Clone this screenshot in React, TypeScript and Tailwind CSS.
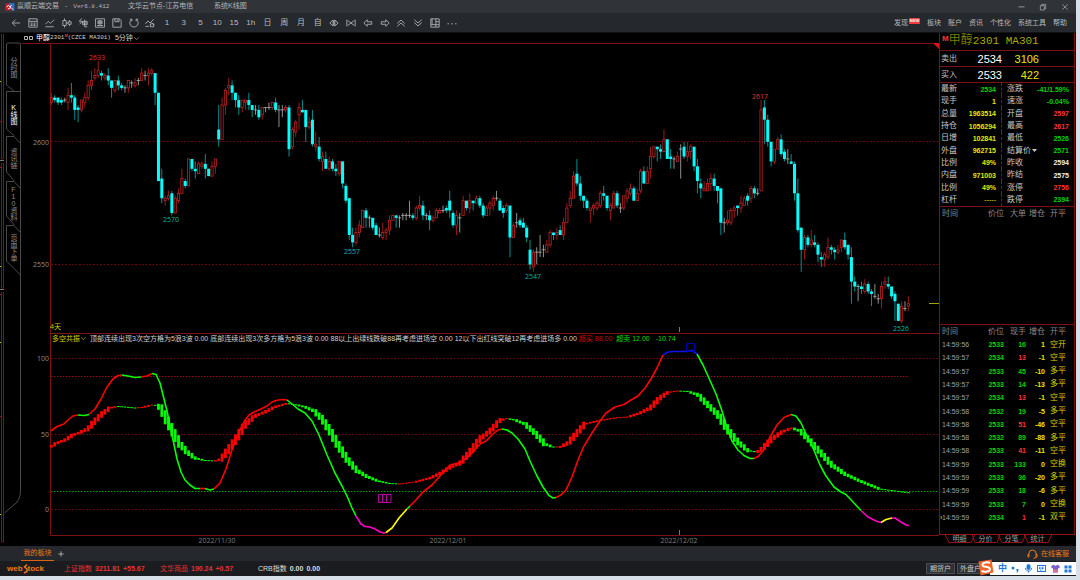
import { useState } from 'react';
import type { ReactNode } from 'react';

type Candle = [number, number, number, number];

// open, high, low, close, counted from 2500
const CANDLES: Candle[] = [
  [116, 120, 115, 118], [118, 119, 116, 117], [118, 118, 115, 116], [117, 118, 115, 116], [117, 118, 116, 117],
  [116, 122, 113, 119], [119, 124, 116, 118], [118, 119, 109, 113], [114, 115, 108, 113], [113, 117, 112, 117],
  [116, 120, 114, 118], [118, 125, 117, 123], [123, 129, 121, 125], [126, 130, 125, 127], [127, 133, 126, 129],
  [128, 129, 125, 127], [126, 128, 125, 127], [127, 130, 123, 125], [125, 125, 118, 122], [121, 125, 120, 125],
  [125, 127, 121, 123], [123, 124, 121, 122], [122, 123, 120, 122], [122, 125, 120, 125], [124, 125, 122, 124],
  [123, 126, 122, 124], [125, 126, 123, 125], [125, 130, 125, 128], [127, 129, 125, 127], [127, 130, 123, 128],
  [128, 130, 127, 129], [128, 128, 115, 120], [120, 120, 84, 84], [85, 89, 75, 77], [76, 78, 74, 77],
  [77, 80, 76, 78], [79, 80, 70, 71], [71, 78, 71, 77], [76, 81, 75, 79], [79, 89, 79, 85],
  [84, 85, 81, 82], [82, 93, 82, 93], [93, 93, 88, 89], [89, 92, 85, 88], [87, 92, 87, 91],
  [90, 92, 89, 91], [91, 95, 85, 89], [89, 89, 86, 86], [86, 92, 86, 90], [90, 93, 87, 93],
  [105, 115, 98, 101], [101, 118, 101, 115], [115, 122, 111, 121], [122, 126, 119, 123], [123, 125, 117, 120],
  [120, 120, 114, 117], [117, 119, 111, 114], [114, 117, 112, 117], [116, 117, 113, 117], [117, 120, 113, 115],
  [115, 115, 110, 113], [113, 115, 111, 113], [113, 115, 109, 110], [111, 114, 109, 114], [114, 114, 112, 114],
  [114, 116, 113, 114], [114, 116, 113, 116], [116, 118, 112, 113], [113, 115, 106, 113], [113, 115, 110, 113],
  [113, 115, 112, 114], [114, 115, 94, 97], [98, 106, 97, 105], [104, 109, 102, 108], [111, 116, 105, 114],
  [113, 117, 112, 112], [113, 113, 100, 106], [106, 110, 105, 108], [109, 113, 98, 99], [98, 104, 96, 99],
  [98, 102, 92, 93], [92, 96, 88, 94], [93, 96, 89, 89], [89, 94, 88, 92], [92, 93, 88, 89],
  [89, 91, 86, 88], [87, 92, 86, 92], [92, 92, 81, 83], [82, 83, 75, 76], [77, 77, 60, 62],
  [62, 65, 57, 59], [59, 65, 58, 63], [63, 68, 61, 66], [65, 72, 65, 72], [72, 73, 65, 69],
  [69, 70, 65, 69], [69, 69, 64, 65], [66, 67, 62, 62], [62, 65, 61, 62], [61, 67, 60, 63],
  [63, 65, 60, 64], [64, 70, 62, 68], [68, 70, 68, 70], [70, 70, 65, 69], [69, 70, 65, 69],
  [70, 71, 68, 70], [70, 71, 68, 70], [70, 76, 69, 70], [70, 71, 68, 69], [69, 74, 68, 73],
  [73, 78, 72, 74], [74, 76, 68, 70], [70, 71, 68, 70], [70, 72, 64, 68], [68, 70, 67, 69],
  [69, 73, 69, 72], [71, 73, 71, 72], [72, 74, 71, 72], [73, 74, 71, 72], [76, 80, 69, 72],
  [71, 72, 65, 66], [66, 72, 62, 70], [69, 71, 63, 69], [70, 78, 70, 76], [76, 76, 72, 73],
  [73, 79, 71, 76], [76, 76, 72, 75], [75, 78, 75, 77], [77, 78, 73, 74], [74, 75, 69, 70],
  [70, 74, 70, 73], [73, 76, 70, 75], [74, 78, 72, 77], [77, 80, 76, 77], [76, 77, 72, 72],
  [73, 74, 69, 71], [72, 75, 71, 74], [74, 74, 53, 61], [61, 67, 61, 66], [67, 71, 65, 67],
  [68, 69, 65, 66], [67, 69, 65, 65], [65, 66, 59, 61], [56, 60, 48, 50], [49, 56, 47, 55],
  [55, 57, 50, 55], [55, 62, 53, 55], [56, 58, 53, 56], [55, 60, 55, 58], [58, 64, 57, 63],
  [63, 63, 60, 62], [62, 65, 60, 63], [64, 66, 62, 62], [62, 69, 60, 67], [67, 75, 67, 73],
  [74, 80, 73, 77], [77, 88, 77, 86], [87, 93, 82, 83], [83, 86, 76, 78], [78, 78, 73, 76],
  [76, 77, 72, 73], [72, 73, 67, 73], [73, 75, 70, 74], [73, 76, 72, 75], [74, 80, 73, 79],
  [79, 82, 76, 78], [78, 78, 72, 73], [72, 75, 68, 74], [73, 80, 73, 79], [79, 80, 73, 74],
  [73, 75, 71, 73], [73, 78, 72, 78], [77, 81, 75, 80], [79, 83, 78, 81], [81, 82, 76, 76],
  [76, 81, 76, 79], [80, 89, 79, 88], [88, 90, 83, 83], [83, 90, 83, 88], [89, 98, 85, 94],
  [94, 98, 93, 98], [98, 98, 92, 97], [97, 99, 93, 96], [96, 105, 96, 101], [101, 101, 93, 93],
  [94, 97, 89, 93], [93, 94, 89, 93], [92, 96, 92, 94], [97, 99, 85, 97], [98, 100, 93, 94],
  [94, 100, 92, 96], [96, 99, 93, 98], [98, 98, 88, 90], [90, 93, 79, 84], [83, 85, 77, 81],
  [80, 84, 80, 81], [80, 85, 80, 83], [83, 87, 80, 85], [85, 87, 80, 82], [82, 82, 75, 80],
  [81, 81, 62, 67], [67, 69, 63, 67], [67, 72, 66, 68], [67, 73, 66, 72], [72, 74, 69, 73],
  [74, 74, 70, 73], [73, 78, 71, 75], [74, 78, 74, 77], [78, 79, 74, 76], [77, 82, 75, 81],
  [81, 82, 77, 79], [79, 81, 78, 79], [80, 117, 80, 113], [114, 117, 99, 109], [109, 111, 98, 100],
  [100, 100, 90, 92], [92, 97, 91, 97], [97, 102, 97, 101], [101, 103, 94, 95], [96, 97, 92, 93],
  [93, 97, 91, 93], [92, 95, 91, 91], [91, 92, 76, 79], [79, 85, 63, 64], [65, 65, 47, 56],
  [56, 62, 52, 61], [61, 62, 57, 58], [58, 64, 57, 60], [59, 62, 57, 58], [58, 59, 51, 54],
  [53, 55, 49, 52], [52, 55, 49, 54], [53, 61, 52, 57], [57, 58, 54, 56], [56, 57, 52, 55],
  [55, 58, 54, 56], [57, 60, 55, 60], [60, 63, 56, 57], [58, 58, 52, 54], [53, 57, 34, 43],
  [43, 45, 39, 41], [41, 42, 35, 41], [41, 43, 38, 40], [39, 44, 38, 42], [42, 43, 38, 39],
  [39, 40, 33, 38], [37, 42, 36, 37], [36, 38, 34, 36], [36, 43, 32, 41], [42, 45, 40, 43],
  [42, 45, 40, 41], [41, 41, 36, 37], [38, 39, 27, 35], [34, 34, 27, 27], [27, 35, 26, 33],
  [32, 35, 31, 32], [33, 37, 31, 34],
];

const candleX = (i: number) => 29.33 + i * 3.3477;
const priceY = (p: number) => 98.8 + (100 - p) * 2.453;

const PRICE_LABELS = [
  { text: '2633', x: 75, y: 17, up: true },
  { text: '2570', x: 149, y: 179, up: false },
  { text: '2557', x: 330, y: 211, up: false },
  { text: '2547', x: 511, y: 236, up: false },
  { text: '2617', x: 738, y: 56, up: true },
  { text: '2526', x: 879, y: 288, up: false },
];

const RED = '#ff0000';
const GREEN = '#00ff00';
const MAGENTA = '#ff00c8';
const YELLOW = '#ffff00';
const BLUE = '#1010f0';

// each run starts at the point where the run before it ends
const FAST_LINE = [
  { color: RED, points: '51,430 57,425.5 64,423 68,419 73,415 78,414' },
  { color: GREEN, points: '78,414 84,414.5 89,413.5' },
  { color: RED, points: '89,413.5 95,408 101,398 107,386 113,378 118,374.5 122,374' },
  { color: GREEN, points: '122,374 128,375 135,376.5 141,376' },
  { color: RED, points: '141,376 147,375 152,372.5' },
  { color: GREEN, points: '152,372.5 156,373.5 160,382 163,394 167,410 172,434 177,458 181,471 185,479 190,484 195,487.5 200,487.5' },
  { color: RED, points: '200,487.5 205,487.5' },
  { color: GREEN, points: '205,487.5 210,489 214,488' },
  { color: RED, points: '214,488 220,482 226,468 232,449 238,433 245,419 249,414 254,411 262,407.5 267,405 272,401 278,399 284,398.5 287,399' },
  { color: GREEN, points: '287,399 292,403 298,408 305,412 312,420 319,434 327,454 335,472 342,485 347,495 352,507 356,515' },
  { color: MAGENTA, points: '356,515 361,523 365,525.5 370,526 375,528 380,531 384,532 386,531.5' },
  { color: YELLOW, points: '386,531.5 392,527 399,517 407,508' },
  { color: GREEN, points: '407,508 410,505' },
  { color: RED, points: '410,505 415,500 423,491 432,484 440,475 450,464 458,462 466,458 473,451 480,443 486,440 493,433 498,429 502,428' },
  { color: GREEN, points: '502,428 507,429 512,432 518,438 525,448 530,460 537,475 543,486 549,494.5 553,497 556,496.5' },
  { color: RED, points: '556,496.5 561,494 566,489 572,476 578,459 584,445 592,432 600,420 606,412 615,406 624,403.5 631,399 638,395 645,387 651,378 657,367 663,354' },
  { color: BLUE, points: '663,354 668,351 674,350.5 680,350.5 687,350.5 692,349.5 697,353' },
  { color: GREEN, points: '697,353 703,364 708,375 716,393 722,410 727,427 732,440 738,449 744,454.5 750,457.5 754,457.5' },
  { color: RED, points: '754,457.5 758,455.5 763,450 770,436 777,424 784,416.5 791,413.5' },
  { color: GREEN, points: '791,413.5 796,415 801,422 807,435 813,447 820,464 826,475 834,486 841,491 846,493.5 853,501 861,509.5' },
  { color: MAGENTA, points: '861,509.5 868,516 876,520 881,521.5' },
  { color: YELLOW, points: '881,521.5 886,518.5 892,517' },
  { color: MAGENTA, points: '892,517 895,517 901,521 906,524 909,524.5' },
];

const SLOW_KEYS: [number, number][] = [
  [51, 445.5], [57, 442], [65, 439], [73, 434], [80, 431.5], [88, 427.5], [95, 420], [102, 413], [110, 407],
  [117, 405.5], [125, 406], [135, 407], [142, 406.5], [152, 404], [157, 404.5], [161, 408], [165, 416],
  [172, 429], [180, 443], [187, 451], [195, 457], [205, 459.5], [215, 460], [221, 458], [228, 449],
  [236, 438], [245, 424], [255, 415], [265, 411], [275, 406], [287, 402.5], [297, 404], [305, 406],
  [314, 410], [322, 418], [330, 430], [338, 444], [347, 458], [357, 469.5], [367, 475.5], [378, 480],
  [390, 482.5], [400, 483], [415, 481], [430, 477], [440, 472.5], [450, 466.5], [460, 462], [470, 451],
  [480, 438], [490, 430], [500, 419.5], [507, 417.5], [515, 419], [525, 423], [535, 432], [545, 443],
  [553, 446], [560, 446], [568, 442], [577, 432], [585, 423], [600, 419.5], [615, 417], [628, 416],
  [640, 412], [650, 407], [660, 397], [668, 391.5], [678, 390], [688, 390.5], [698, 394], [708, 404],
  [718, 414], [728, 429], [738, 441], [748, 449.5], [757, 451], [763, 447], [772, 438], [782, 431],
  [792, 427], [800, 430], [810, 440], [820, 451], [832, 464], [845, 473], [860, 480], [880, 488],
  [895, 490], [910, 492],
];

function slowY(x: number) {
  const k = SLOW_KEYS.findIndex(([kx]) => kx >= x);
  if (k <= 0) return SLOW_KEYS[0][1];
  const [x0, y0] = SLOW_KEYS[k - 1];
  const [x1, y1] = SLOW_KEYS[k];
  return y0 + ((y1 - y0) * (x - x0)) / (x1 - x0);
}

const STATS = [
  ['最新', '2534', 'text-[#00d200]', '涨跌', '-41/1.59%', 'text-[#00d200]'],
  ['现手', '1', 'text-[#e6e600]', '速涨', '-0.04%', 'text-[#00d200]'],
  ['总量', '1963514', 'text-[#e6e600]', '开盘', '2597', 'text-[#ff3232]'],
  ['持仓', '1056294', 'text-[#e6e600]', '最高', '2617', 'text-[#ff3232]'],
  ['日增', '102841', 'text-[#e6e600]', '最低', '2526', 'text-[#00d200]'],
  ['外盘', '962715', 'text-[#e6e600]', '结算价', '2571', 'text-[#00d200]'],
  ['比例', '49%', 'text-[#e6e600]', '昨收', '2594', 'text-[#eeeeee]'],
  ['内盘', '971003', 'text-[#e6e600]', '昨结', '2575', 'text-[#eeeeee]'],
  ['比例', '49%', 'text-[#e6e600]', '涨停', '2756', 'text-[#ff3232]'],
  ['杠杆', '-----', 'text-[#a0a000]', '跌停', '2394', 'text-[#00d200]'],
];

const TICKS = [
  ['14:59:56', 2533, 16, 1, '空开', 'g'],
  ['14:59:57', 2534, 13, -1, '空平', 'r'],
  ['14:59:57', 2533, 45, -10, '多平', 'g'],
  ['14:59:57', 2533, 14, -13, '多平', 'g'],
  ['14:59:57', 2534, 13, -1, '空平', 'r'],
  ['14:59:58', 2532, 19, -5, '多平', 'g'],
  ['14:59:58', 2533, 51, -46, '空平', 'r'],
  ['14:59:58', 2532, 89, -88, '多平', 'g'],
  ['14:59:58', 2533, 41, -11, '空平', 'r'],
  ['14:59:59', 2533, 133, 0, '空换', 'g'],
  ['14:59:59', 2533, 36, -20, '多平', 'g'],
  ['14:59:59', 2533, 18, -6, '多平', 'g'],
  ['14:59:59', 2533, 7, 0, '空换', 'g'],
  ['14:59:59', 2534, 1, -1, '双平', 'r'],
];

const TOOLS: { label: string; text?: string; d?: string }[] = [
  { label: '返回', d: 'M22 12H4M11 4l-8 8 8 8' },
  { label: '报价', d: 'M2 2h20v20H2zM2 8h20M6 12h5M13 12h5M6 15h5M13 15h5M6 18h5M13 18h5' },
  { label: '分时', d: 'M1 15l7-7 5 5 9-9M1 21h20' },
  { label: 'K线', d: 'M6 1v5M6 18v5M2 6h8v12H2zM18 5v4M18 15v4M15 9h7v6h-7zM10 12h5' },
  { label: '画线', d: 'M9 1L3 8h7l-6 7M11 8h11v8H11zM16 4v17h6M11 12h11' },
  { label: '窗口', d: 'M1 2h22v20H1zM12 5v11M7 7h10v7H7zM7 10h10M5 18h14' },
  { label: '保存', d: 'M2 2h16l4 4v16H2zM7 2v7h10V2M13 4v3' },
  { label: '刷新', d: 'M7 3a10 10 0 1 0 10 0M7 3H2M7 3v5M17 3h5M17 3v5' },
  { label: '指标', d: 'M1 14l6-7 5 5 9-9M1 20h9M13 14h8v7h-8zM16 11l6 6' },
  { label: '1分钟', text: '1' },
  { label: '3分钟', text: '3' },
  { label: '5分钟', text: '5' },
  { label: '10分钟', text: '10' },
  { label: '15分钟', text: '15' },
  { label: '1小时', text: '1h' },
  { label: '日线', text: '日' },
  { label: '周线', text: '周' },
  { label: '月线', text: '月' },
  { label: '自定义', text: '自' },
  { label: '缩小', d: 'M10 5l-8 7 8 7zM14 5l8 7-8 7zM12 5v14' },
  { label: '放大', d: 'M2 4v16M4 6l8 6-8 6M22 4v16M20 6l-8 6 8 6' },
  { label: '左移', d: 'M10 4l-8 8 8 8v-5h11V9H10z' },
  { label: '右移', d: 'M14 4l8 8-8 8v-5H3V9h11z' },
  { label: '上一个', d: 'M3 13l9-8 9 8M3 20l9-8 9 8' },
  { label: '下一个', d: 'M3 4l9 8 9-8M3 11l9 8 9-8' },
  { label: '布局', d: 'M2 2h20v20H2zM14 2v20M2 16h20M14 9h8M5 2v14' },
  { label: '更多', d: 'M1 14h4M10 14h4M19 14h4' },
];

const SIDE_TABS = [
  { name: '分时图', height: 'h-[49px]' },
  { name: 'K线图', height: 'h-[44px]' },
  { name: '资讯链', height: 'h-[45px]' },
  { name: 'F10资料', height: 'h-[45px]' },
  { name: '页面下单', height: 'h-[44px]' },
];

function Icon({ d, className }: { d: string; className: string }) {
  return (
    <svg className={className} viewBox="0 0 24 24" fill="none" stroke="currentColor" strokeWidth={2}>
      <path d={d} />
    </svg>
  );
}

function TitleBar() {
  return (
    <header className="flex h-[13px] items-center bg-[#303338] pl-[5px] text-[7px] text-[#b4b6b8]">
      <svg className="mr-[2px] h-[10px] w-[10px]" viewBox="0 0 20 20">
        <rect x="1" y="3" width="11" height="14" fill="#c81e28" />
        <path d="M8 2h11v16h-6V9H8z" fill="#2c6fb8" />
        <path d="M3 10l4-3 3 3 3-4M6 14l6-3 4 4" stroke="#fff" strokeWidth={2} fill="none" />
      </svg>
      <span className="flex w-[111px] items-center gap-[6px]">
        赢顺云端交易<span>-</span>
        <span className="font-['Liberation_Mono',monospace] text-[6px]">Ver6.8.412</span>
      </span>
      <span className="w-[86px]">文华云节点-江苏电信</span>
      <span className="flex-1">系统K线图</span>
      <button type="button" aria-label="最小化" className="w-[22px]">
        <Icon d="M4 13h16" className="mx-auto h-[9px] w-[9px]" />
      </button>
      <button type="button" aria-label="还原" className="w-[22px]">
        <Icon d="M4 8h12v13H4zM8 8V4h12v13h-4" className="mx-auto h-[8px] w-[8px]" />
      </button>
      <button type="button" aria-label="关闭" className="w-[22px]">
        <Icon d="M4 4l16 16M20 4L4 20" className="mx-auto h-[8px] w-[8px]" />
      </button>
    </header>
  );
}

function Toolbar() {
  return (
    <div className="flex h-[20px] items-center justify-between border-b border-[#111315] bg-[#25282c] text-[7px] text-[#b9bbbd]">
      <div className="ml-2 grid w-[452px] grid-cols-27 items-center">
        {TOOLS.map((t) => (
          <button key={t.label} type="button" aria-label={t.label} className="flex h-[18px] items-center justify-center pt-px text-[8px] leading-none">
            {t.d ? <Icon d={t.d} className="h-[10px] w-[10px]" /> : t.text}
          </button>
        ))}
      </div>
      <nav className="flex gap-[7px] pr-[9px] leading-[10px]">
        <a href="#discover" className="flex">
          发现
          <span className="ml-px h-[6px] w-[11px] rounded-[1px] bg-[#f03c3c] text-center text-[4px] leading-[6px] font-bold text-white">NEW</span>
        </a>
        <a href="#block">板块</a>
        <a href="#account">账户</a>
        <a href="#news">资讯</a>
        <a href="#custom">个性化</a>
        <a href="#tools">系统工具</a>
        <a href="#help">帮助</a>
      </nav>
    </div>
  );
}

function SideRail({ active, onSelect }: { active: string; onSelect: (name: string) => void }) {
  return (
    <aside className="relative w-[22px] shrink-0 pt-[10px]">
      <svg className="absolute inset-0 h-full w-full" fill="none">
        <g stroke="#8c0f0f">
          <path d="M1.500 1v125h2V1M1.500 130v125h2V130M1.500 259v250h2V259" />
        </g>
        <path d="M0 127.500h4M0 256.500h4" stroke="#777" />
        <path d="M0 48.500h1M0 233.500h1M0 309.500h1M0 481.500h1" stroke="#c8c800" />
        <path d="M0 134.500h2M0 261.500h2M0 88.500h1M0 383.500h1" stroke="#a01414" />
        <g stroke="#4a4a4a">
          <path d="M6.500 11V52l8 6.500M6.500 11q0-1 1-1h12q1 0 1 1v447q0 10-8 15l-8 7" />
          <path d="M20.500 58.500h-14V96l8 7M14 103.500h-7.500V139l8 9M14 103.500l6.500 7M14 148.500h-7.500V183l8 9M14 148.500l6.500 7M14 192.500h-7.500V228l14 14M14 192.500l6.500 7" />
        </g>
      </svg>
      <nav className="relative ml-[6px] flex flex-col">
        {SIDE_TABS.map((tab) => (
          <button
            key={tab.name}
            type="button"
            onClick={() => onSelect(tab.name)}
            className={`${tab.height} ${tab.name === active ? 'text-white' : 'text-[#8c8c8c]'} flex w-[14px] items-center justify-center text-[7px] leading-[14px] [text-orientation:upright] [writing-mode:vertical-rl]`}
          >
            {tab.name}
          </button>
        ))}
      </nav>
    </aside>
  );
}

function CandleShape({ candle, i }: { candle: Candle; i: number }) {
  const [open, high, low, close] = candle;
  const x = candleX(i);
  const top = priceY(Math.max(open, close));
  const height = Math.abs(open - close) * 2.453;
  if (open === close) {
    return <path d={`M${x} ${priceY(high)}V${priceY(low)}M${x - 1.7} ${top}h3.4`} stroke="#b4b4b4" strokeWidth={0.8} />;
  }
  if (close < open) {
    return (
      <g>
        <path d={`M${x} ${priceY(high)}V${priceY(low)}`} stroke="#00a0a0" strokeWidth={0.9} />
        <rect x={x - 1.5} y={top} width={3} height={height} fill="#00ffff" />
      </g>
    );
  }
  return (
    <g stroke="#c42222" strokeWidth={0.8} fill="none">
      <path d={`M${x} ${priceY(high)}V${top}M${x} ${top + height}V${priceY(low)}`} />
      <rect x={x - 1.1} y={top} width={2.2} height={height} />
    </g>
  );
}

function PriceChart() {
  return (
    <svg className="block h-[290px] w-full font-['Open_Sans','Noto_Sans_CJK_SC',sans-serif] text-[7px]">
      <path d="M0 0.500H2000" stroke="#7d1010" />
      <path d="M28.500 0V290" stroke="#7d1010" />
      <g stroke="#640a0a" strokeDasharray="2 1.500">
        <line x1="29" x2="100%" y1="98.500" y2="98.500" />
        <line x1="29" x2="100%" y1="221.500" y2="221.500" />
      </g>
      <g fill="#8c8c8c" textAnchor="end">
        <text x="27" y="102">2600</text>
        <text x="27" y="224">2550</text>
      </g>
      {CANDLES.map((c, i) => (
        <CandleShape key={i} candle={c} i={i} />
      ))}
      {PRICE_LABELS.map((l) => (
        <text key={l.text} x={l.x} y={l.y} textAnchor="middle" fill={l.up ? '#e03232' : '#00b4b4'}>
          {l.text}
        </text>
      ))}
      <path d="M907 260.500h10" stroke="#a0a000" />
      <path d="M911 0h6v6z" fill="#dc1414" />
      <path d="M657.500 284v5" stroke="#777" />
      <text x="28" y="286" fill="#d2d200">4天</text>
    </svg>
  );
}

function IndicatorHeader() {
  return (
    <div className="ml-[28px] flex h-[10px] items-center gap-[2px] overflow-hidden border-t border-l border-[#7d1010] pl-px text-[7px] leading-[9px] whitespace-nowrap text-[#d2d2d2]">
      <button type="button" className="mr-px flex items-center text-[#d2d200]">
        多空共振
        <Icon d="M4 8l8 8 8-8" className="h-[7px] w-[7px]" />
      </button>
      <span>顶部连续出现3次空方格为5浪3波 0.00</span>
      <span>底部连续出现3次多方格为5浪3波 0.00</span>
      <span>88以上出绿线跌破88再考虑进场空 0.00</span>
      <span>12以下出红线突破12再考虑进场多 0.00</span>
      <span className="text-[#dc0000]">超买 88.00</span>
      <span className="pl-[2px] text-[#00dc00]">超卖 12.00</span>
      <span className="pl-[4px] text-[#00dc00]">-10.74</span>
    </div>
  );
}

function IndicatorChart() {
  return (
    <svg className="block h-[203px] w-full font-['Open_Sans',sans-serif] text-[7px]" fill="none">
      <path d="M28.500 0V192.500H2000" stroke="#7d1010" />
      <g stroke="#640a0a" strokeDasharray="2 1.500">
        <line x1="29" x2="100%" y1="15.500" y2="15.500" />
        <line x1="29" x2="100%" y1="91.500" y2="91.500" />
        <line x1="29" x2="100%" y1="166.500" y2="166.500" />
      </g>
      <path d="M29 33.500H886" stroke="#961414" strokeDasharray="1.500 1.500" />
      <line x1="29" x2="100%" y1="148.500" y2="148.500" stroke="#00a000" strokeDasharray="1.500 1.500" />
      <g fill="#8c8c8c" textAnchor="end">
        <text x="27" y="18">100</text>
        <text x="27" y="94">50</text>
        <text x="27" y="169">0</text>
      </g>
      <g fill="#7d7d7d" textAnchor="middle">
        <text x="195" y="200">2022/11/30</text>
        <text x="426" y="200">2022/12/01</text>
        <text x="657" y="200">2022/12/02</text>
      </g>
      <path d="M657.500 187v5" stroke="#777" />
      {/* both series are plotted from the window's corner */}
      <g transform="translate(-22 -342)">
        {CANDLES.map((_, i) => {
          const x = candleX(i) + 22;
          const y = slowY(x);
          const slope = slowY(Math.min(x + 1.67, 910)) - slowY(x - 1.67);
          const h = Math.max(1, Math.abs(slope) * 2.2);
          return <rect key={i} x={x - 1.4} y={y - h / 2} width={2.8} height={h} fill={slope > 0 ? GREEN : RED} />;
        })}
        {FAST_LINE.map((run) => (
          <polyline key={run.points} points={run.points} stroke={run.color} strokeWidth={1.6} strokeLinejoin="round" />
        ))}
        <path d="M378.500 493.500h12.500v8h-12.500zM382.500 493.500v8M386.500 493.500v8" stroke="#b4009b" />
        <path d="M686.500 342.500h8v8h-8z" stroke="#0000b4" />
      </g>
    </svg>
  );
}

function ChartArea() {
  return (
    <section className="min-w-0 flex-1">
      <div className="flex h-[10px] items-center pl-[2px] text-[7px] leading-[10px] text-[#d2d2d2]">
        <svg className="mr-[2px] h-[4px] w-[10px]" fill="none" stroke="#b4b4b4">
          <path d="M.5.5h3v3h-3zM5.500.5h3v3h-3z" />
        </svg>
        <span className="text-white">甲醇</span>
        <span className="font-['Liberation_Mono',monospace] text-[6px]">2301</span>
        <sup className="top-[-2px] text-[4px] font-bold text-[#ff3232]">M</sup>
        <span className="font-['Liberation_Mono',monospace] text-[6px]">(CZCE MA301)</span>
        <button type="button" className="ml-[4px] flex items-center">
          5分钟
          <Icon d="M4 8l8 8 8-8" className="h-[7px] w-[7px]" />
        </button>
      </div>
      <PriceChart />
      <IndicatorHeader />
      <IndicatorChart />
    </section>
  );
}

function ListHead({ third }: { third: string }) {
  return (
    <tr className="h-[13px] text-[8px] text-[#8c8c8c]">
      <th className="w-[31px] text-left font-normal">时间</th>
      <th className="w-[31px] font-normal">价位</th>
      <th className="w-[22px] font-normal">{third}</th>
      <th className="w-[19px] font-normal">增仓</th>
      <th className="w-[21px] font-normal">开平</th>
    </tr>
  );
}

function BidRow({ label, price, volume }: { label: string; price: string; volume: string }) {
  return (
    <div className="flex h-[16px] items-center border-t border-[#7d1010] pl-px text-[11px] leading-[14px]">
      <span className="w-[36px] text-[8px] text-[#c8c8c8]">{label}</span>
      <span className="w-[25px] text-right text-white">{price}</span>
      <span className="w-[37px] text-right text-[#e6e600]">{volume}</span>
    </div>
  );
}

function QuotePanel() {
  return (
    <aside className="flex w-[137px] shrink-0 flex-col">
      <div className="mr-px flex h-[501px] flex-col border-x border-[#7d1010]">
        <h1 className="flex h-[17px] items-center pl-[2px] font-['Liberation_Mono','Noto_Sans_CJK_SC',monospace] text-[11px] leading-[17px] whitespace-pre text-[#a8a800]">
          <span className="mb-[6px] font-['Liberation_Sans',sans-serif] text-[8px] font-bold text-[#ff3232]">M</span>
          <span className="text-[12px] font-light">甲醇</span>2301 MA301
        </h1>
        <BidRow label="卖出" price="2534" volume="3106" />
        <BidRow label="买入" price="2533" volume="422" />
        <div className="grid h-[125px] grid-cols-[62px_1fr] grid-rows-10 border-y border-[#7d1010] text-[7px] font-bold">
          {STATS.map(([l1, v1, c1, l2, v2, c2], i) => (
            <div key={i} className="contents">
              <div className="flex items-center justify-between border-r border-dashed border-[#8c1212] pr-[5px] pl-px leading-none">
                <span className="text-[8px] font-normal text-[#c8c8c8]">{l1}</span>
                <span className={c1}>{v1}</span>
              </div>
              <div className="flex items-center justify-between pr-[5px] pl-[5px] leading-none">
                <span className="flex items-center text-[8px] font-normal text-[#c8c8c8]">
                  {l2}
                  {l2 === '结算价' && (
                    <svg className="ml-px h-[3px] w-[5px]" viewBox="0 0 5 3" fill="currentColor">
                      <path d="M0 0h5L2.500 3z" />
                    </svg>
                  )}
                </span>
                <span className={c2}>{v2}</span>
              </div>
            </div>
          ))}
        </div>
        <div className="h-[117px] pl-[2px]">
          <table className="w-[124px] table-fixed text-right leading-none">
            <thead>
              <ListHead third="大单" />
            </thead>
          </table>
        </div>
        <div className="border-t border-[#7d1010] pl-[2px]">
          <table className="h-[199px] w-[124px] table-fixed text-right text-[7px] leading-none font-bold">
            <thead>
              <ListHead third="现手" />
            </thead>
            <tbody>
              {TICKS.map(([time, price, lots, change, kind, side], i) => (
                <tr key={i}>
                  <td className="relative text-left font-normal text-[#a0a0a0]">
                    {i === TICKS.length - 1 && <span className="absolute -left-[2px] text-[#e6e600]">›</span>}
                    {time}
                  </td>
                  <td className="text-[#00d200]">{price}</td>
                  <td className={side === 'r' ? 'text-[#ff3232]' : 'text-[#00d200]'}>{lots}</td>
                  <td className="text-[#e6e600]">{change}</td>
                  <td className="text-[8px] font-normal text-[#d2d200]">{kind}</td>
                </tr>
              ))}
            </tbody>
          </table>
        </div>
      </div>
      <div className="relative flex h-[11px] pl-[6px] text-[7px] leading-[9px] text-[#a0a0a0]">
        <svg className="absolute inset-0 h-full w-full" fill="none" stroke="#961414">
          <path d="M0 .5h136M6 .5l4 8h22l4-8M33 .5l3 8h22l3-8M59 .5l4 8h20l4-8M85 .5l4 8h20l4-8" />
        </svg>
        {['明细', '分价', '分笔', '统计'].map((name) => (
          <button key={name} type="button" className="relative h-[9px] w-[26px] pl-[3px]">
            {name}
          </button>
        ))}
      </div>
    </aside>
  );
}

function ImeBar() {
  return (
    <div className="relative flex h-[13px] w-[86px] items-center justify-between bg-white pr-[4px] pl-[8px] text-[#1e78dc]">
      <svg className="absolute -top-[3px] -left-[13px] h-[17px] w-[17px]" viewBox="0 0 34 34">
        <path d="M3 5L29 1l4 26-26 6z" fill="#f06428" />
        <path d="M26 8C19 5 9 8 11 13c2 4 14 1 15 7 0 5-10 7-17 4" stroke="#fff" strokeWidth={4} fill="none" />
      </svg>
      <span className="text-[9px] leading-none font-bold">中</span>
      <svg className="h-[8px] w-[8px]" viewBox="0 0 16 16" fill="currentColor">
        <circle cx="4" cy="6" r="3" />
        <path d="M11 8h4v3l-2 4h-2l1-3h-1z" />
      </svg>
      <svg className="h-[9px] w-[9px]" viewBox="0 0 18 18" fill="none" stroke="currentColor" strokeWidth={2}>
        <rect x="6" y="1" width="6" height="10" rx="3" fill="currentColor" />
        <path d="M3 8c0 8 12 8 12 0M9 14v3" />
      </svg>
      <svg className="h-[9px] w-[9px]" viewBox="0 0 18 18" fill="none" stroke="currentColor" strokeWidth={2}>
        <rect x="1" y="3" width="16" height="12" />
        <path d="M4 6.500h10M4 9h10M6 12h6" strokeDasharray="2 1" />
      </svg>
      <svg className="h-[9px] w-[9px]" viewBox="0 0 18 18">
        <path d="M5 1L0 5l2 4 2-1v9h10V8l2 1 2-4-5-4c-1 3-7 3-8 0z" fill="#7d5fc8" />
        <path d="M4 11h10v6H4z" fill="#e66e8c" />
      </svg>
      <svg className="h-[8px] w-[8px]" viewBox="0 0 16 16" fill="currentColor">
        <path d="M1 1h6v6H1zM9 1h6v6H9zM1 9h6v6H1zM9 9h6v6H9z" />
      </svg>
    </div>
  );
}

function Ticker({ className, children }: { className: string; children: ReactNode }) {
  return <div className={`flex gap-[3px] ${className}`}>{children}</div>;
}

function Footer() {
  return (
    <footer className="text-[7px] leading-[10px]">
      <div className="flex h-[15px] items-stretch bg-[#25292e]">
        <button type="button" className="ml-[21px] w-[33px] border-b border-[#dc6414] text-[#f07814]">
          我的板块
        </button>
        <button type="button" aria-label="添加" className="w-[13px] text-[#dcdcdc]">
          <Icon d="M4 12h16M12 4v16" className="mx-auto h-[8px] w-[8px]" />
        </button>
        <a href="#service" className="mr-[7px] ml-auto flex items-center gap-[3px] text-[#f07814]">
          <svg className="h-[10px] w-[11px]" viewBox="0 0 22 20" fill="none" stroke="currentColor" strokeWidth={2}>
            <path d="M4 16V9a7 7 0 0 1 14 0v7M4 10H2v6h2M18 10h2v6l-7 3" />
          </svg>
          在线客服
        </a>
      </div>
      <div className="flex h-[15px] items-center bg-[#1a1c20] font-bold">
        <div className="flex w-[64px] pl-[7px] text-[8px] text-[#f07814]">
          web
          <svg className="h-[10px] w-[5px]" viewBox="0 0 10 20" fill="none" stroke="currentColor" strokeWidth={3}>
            <path d="M8 1L3 6l5 4v5l-6 3" />
          </svg>
          tock
        </div>
        <Ticker className="w-[96px] text-[#e63232]">
          <span className="font-normal">上证指数</span>
          <span>3211.81</span>
          <span>+55.67</span>
        </Ticker>
        <Ticker className="w-[98px] text-[#e63232]">
          <span className="font-normal">文华商品</span>
          <span>190.24</span>
          <span>+0.57</span>
        </Ticker>
        <Ticker className="flex-1 text-[#dcdcdc]">
          <span className="font-normal">CRB指数</span>
          <span>0.00</span>
          <span>0.00</span>
        </Ticker>
        <button type="button" className="mr-[2px] h-[11px] w-[29px] border border-[#4a4d52] bg-[#2d3034] leading-[9px] font-normal text-[#c8c8c8]">
          期货户
        </button>
        <button type="button" className="h-[11px] w-[33px] border border-[#4a4d52] bg-[#2d3034] pr-[6px] leading-[9px] font-normal text-[#c8c8c8]">
          外盘户
        </button>
        <ImeBar />
      </div>
    </footer>
  );
}

export default function App() {
  const [sideTab, setSideTab] = useState('K线图');

  return (
    <div className="bg-[#d7e0e8] pr-[4px] pb-[5px] font-['Liberation_Sans','Noto_Sans_CJK_SC',sans-serif]">
      <TitleBar />
      <Toolbar />
      <main className="flex bg-black">
        <SideRail active={sideTab} onSelect={setSideTab} />
        <ChartArea />
        <QuotePanel />
      </main>
      <Footer />
    </div>
  );
}
